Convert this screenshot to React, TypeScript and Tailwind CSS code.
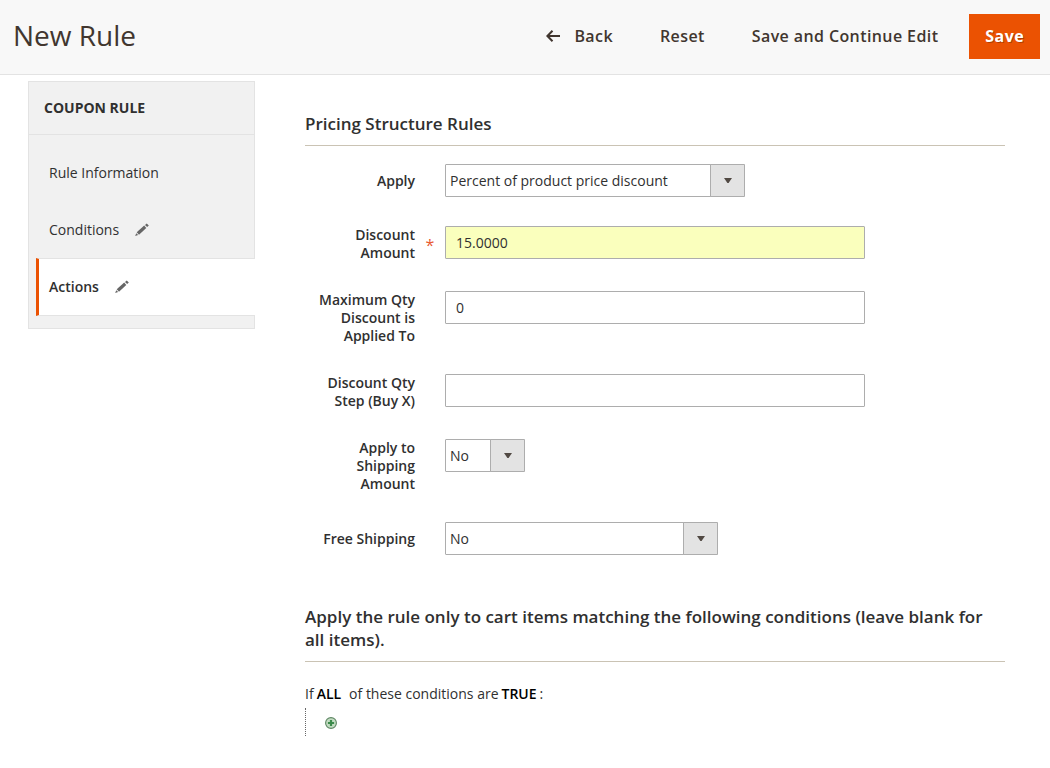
import { useState } from "react";
import type { ReactNode } from "react";

function PencilIcon() {
  return (
    <svg viewBox="0 0 14 14" className="h-3.5 w-3.5 shrink-0 fill-[#666]" aria-hidden="true">
      <path d="M0.2 13 L1.2 10.3 L3.2 12.1 Z" />
      <path d="M1.7 9.3 L9.2 2.6 L11.3 4.9 L4 11.7 Z" />
      <path d="M10 1.9 L11.7 0.4 L13.8 2.5 L12.1 4.1 Z" />
    </svg>
  );
}

function BackArrow() {
  return (
    <svg viewBox="0 0 14 12" className="h-3 w-3.5 fill-none stroke-[#41362f] stroke-2" aria-hidden="true">
      <path d="M14 6 H1.5 M6.5 0.8 L1.4 6 L6.5 11.2" />
    </svg>
  );
}

function AddIcon() {
  return (
    <svg viewBox="0 0 12 12" className="h-3 w-3" aria-hidden="true">
      <circle cx="6" cy="6" r="5.4" fill="#c3dcc2" stroke="#5d8663" strokeWidth="1.1" />
      <path d="M6 2.9 V9.1 M2.9 6 H9.1" stroke="#3b8a4b" strokeWidth="2.2" />
    </svg>
  );
}

function Field({
  id,
  label,
  required,
  singleLine,
  children,
}: {
  id: string;
  label: string;
  required?: boolean;
  singleLine?: boolean;
  children: ReactNode;
}) {
  return (
    <div className="flex items-start">
      <label
        htmlFor={id}
        className={`w-[110px] shrink-0 text-right text-sm/[18px] font-semibold text-[#303030] ${singleLine ? "pt-2" : ""}`}
      >
        {label}
      </label>
      <span className="w-[30px] shrink-0 pt-2.5 text-center text-base/[18px] text-[#e85a32]" aria-hidden="true">
        {required ? "*" : ""}
      </span>
      <div className="min-w-0 grow">{children}</div>
    </div>
  );
}

function TextInput({ id, initial, highlighted }: { id: string; initial: string; highlighted?: boolean }) {
  const [value, setValue] = useState(initial);
  return (
    <input
      id={id}
      type="text"
      value={value}
      onChange={(e) => setValue(e.target.value)}
      className={`block h-[33px] w-full max-w-[420px] rounded-[1px] border border-[#adadad] px-2.5 text-sm text-[#303030] ${
        highlighted ? "bg-[#faffbd]" : "bg-white"
      }`}
    />
  );
}

function Select({ id, options, width }: { id: string; options: string[]; width: string }) {
  return (
    <div className={`relative max-w-full ${width}`}>
      <select
        id={id}
        className="block h-[33px] w-full appearance-none rounded-[1px] border border-[#adadad] bg-white pr-9 pl-1 text-sm text-[#303030]"
      >
        {options.map((o) => (
          <option key={o}>{o}</option>
        ))}
      </select>
      <span className="pointer-events-none absolute inset-y-0 right-0 flex w-[35px] items-center justify-center rounded-r-[1px] border border-[#adadad] bg-[#e3e3e3]">
        <svg viewBox="0 0 8 5" className="h-[5px] w-2 fill-[#514943]" aria-hidden="true">
          <path d="M0 0 H8 L4.6 5 H3.4 Z" />
        </svg>
      </span>
    </div>
  );
}

const actionClass = "flex items-center pb-0.5 text-base font-semibold tracking-wide text-[#41362f]";

export default function App() {
  return (
    <div className="bg-white font-['Open_Sans',sans-serif] text-sm text-[#303030]">
      <header className="flex h-[75px] items-start justify-between border-b border-[#e3e3e3] bg-[#f8f8f8] pt-3.5 pr-2.5 pl-[13px]">
        <h1 className="text-[28px]/[42px] font-normal text-[#41362f]">New Rule</h1>
        <div className="flex h-[45px] items-stretch">
          <button type="button" className={`${actionClass} mr-[47px] gap-3.5`}>
            <BackArrow />
            Back
          </button>
          <button type="button" className={`${actionClass} mr-[47px]`}>
            Reset
          </button>
          <button type="button" className={`${actionClass} mr-[31px]`}>
            Save and Continue Edit
          </button>
          <button
            type="button"
            className="bg-[#eb5202] px-4 pb-0.5 text-base font-bold tracking-wide text-white [text-shadow:1px_1px_0_rgba(0,0,0,0.25)]"
          >
            Save
          </button>
        </div>
      </header>

      <div className="flex items-start gap-[50px] pt-1.5 pr-[45px] pb-8 pl-7">
        <nav className="w-[227px] shrink-0 border border-[#e3e3e3] bg-[#f1f1f1]" aria-label="Coupon rule">
          <h2 className="border-b border-[#e3e3e3] px-[15px] py-4 text-sm/5 font-bold uppercase">Coupon Rule</h2>
          <ul className="pt-[9px] pb-3">
            <li>
              <a href="#rule-information" className="flex h-[57px] items-center px-5">
                Rule Information
              </a>
            </li>
            <li>
              <a href="#conditions" className="flex h-[57px] items-center gap-4 px-5">
                Conditions
                <PencilIcon />
              </a>
            </li>
            <li className="-mr-px ml-[7px]">
              <a
                href="#actions"
                aria-current="page"
                className="flex h-[58px] items-center gap-4 border-y border-l-[3px] border-y-[#e3e3e3] border-l-[#eb5202] bg-white px-2.5 font-semibold"
              >
                Actions
                <PencilIcon />
              </a>
            </li>
          </ul>
        </nav>

        <main className="min-w-0 grow">
          <form>
            <section>
              <h2 className="border-b border-[#cac3b4] pt-8 pb-2.5 text-[17px]/[22px] font-semibold">
                Pricing Structure Rules
              </h2>
              <div className="flex flex-col gap-[29px] pt-[18px]">
                <Field id="apply" label="Apply" singleLine>
                  <Select id="apply" options={["Percent of product price discount"]} width="w-[300px]" />
                </Field>
                <Field id="discount-amount" label="Discount Amount" required>
                  <TextInput id="discount-amount" initial="15.0000" highlighted />
                </Field>
                <Field id="maximum-qty" label="Maximum Qty Discount is Applied To">
                  <TextInput id="maximum-qty" initial="0" />
                </Field>
                <Field id="discount-step" label="Discount Qty Step (Buy X)">
                  <TextInput id="discount-step" initial="" />
                </Field>
                <Field id="apply-to-shipping" label="Apply to Shipping Amount">
                  <Select id="apply-to-shipping" options={["No", "Yes"]} width="w-20" />
                </Field>
                <Field id="free-shipping" label="Free Shipping" singleLine>
                  <Select id="free-shipping" options={["No"]} width="w-[273px]" />
                </Field>
              </div>
            </section>

            <section className="pt-[50px]">
              <h2 className="border-b border-[#cac3b4] pb-2.5 text-[17px]/[23px] font-semibold">
                Apply the rule only to cart items matching the following conditions (leave blank for all items).
              </h2>
              <p className="flex gap-[3px] pt-[22px] text-sm/5">
                <span>If</span>
                <a href="#aggregator" className="mr-[5px] font-semibold text-black">
                  ALL
                </a>
                <span>of these conditions are</span>
                <a href="#value" className="font-semibold text-black">
                  TRUE
                </a>
                <span>:</span>
              </p>
              <div className="mt-1 flex h-7 items-end border-l border-dotted border-[#666] pb-[7px] pl-[19px]">
                <button type="button" aria-label="Add">
                  <AddIcon />
                </button>
              </div>
            </section>
          </form>
        </main>
      </div>
    </div>
  );
}
